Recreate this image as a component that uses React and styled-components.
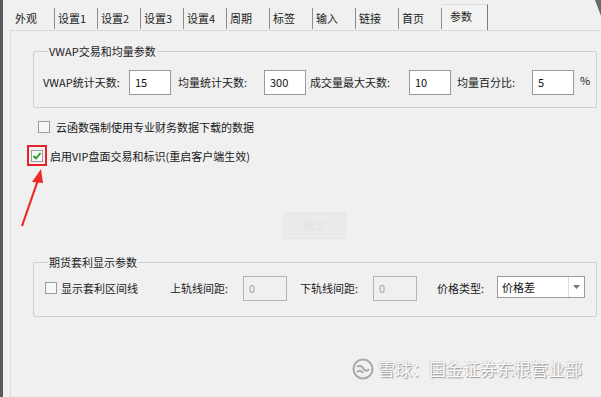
import styled, { createGlobalStyle } from "styled-components"

const Global = createGlobalStyle`
    html, body {
        margin: 0;
        padding: 0;
        background: #f0f0f0;
    }
    * {
        box-sizing: border-box;
    }
`

const Window = styled.div`
    position: relative;
    display: flex;
    width: 601px;
    height: 397px;
    overflow: hidden;
    background: #f0f0f0;
    font-family: "Noto Sans CJK SC", "Microsoft YaHei", sans-serif;
    font-size: 11px;
    color: #1a1a1a;
`

const EdgeStrip = styled.div`
    width: 3px;
    background: #5a5a5a;
    flex-shrink: 0;
`

const Main = styled.div`
    flex: 1;
    display: flex;
    flex-direction: column;
`

const TabBar = styled.div`
    display: flex;
    align-items: flex-end;
    height: 30px;
    padding-left: 9px;
`

const Tab = styled.div`
    width: ${p => p.$w || 43}px;
    height: ${p => (p.$active ? 26 : 21)}px;
    padding-left: ${p => (p.$active ? 8 : 3)}px;
    line-height: ${p => (p.$active ? 22 : 20)}px;
    margin-bottom: ${p => (p.$active ? 0 : 1)}px;
    border-right: 1px solid ${p => (p.$active ? "#7a7a7a" : "#8c8c8c")};
    border-top: ${p => (p.$active ? "1px solid #e0e0e0" : "none")};
    background: ${p => (p.$active ? "#f3f3f3" : "transparent")};
    color: #222;
    white-space: nowrap;
`

const Panel = styled.div`
    position: relative;
    flex: 1;
    margin-left: 7px;
    border-top: 1px solid #dadada;
    border-left: 1px solid #dcdcdc;
    display: flex;
    flex-direction: column;
    padding-left: 22px;
`

const Group = styled.fieldset`
    width: 564px;
    margin: ${p => p.$top}px 0 0 0;
    padding: ${p => p.$pt}px 0 0 9px;
    height: ${p => p.$h}px;
    border: 1px solid #d0d0d0;
    border-radius: 2px;
    display: flex;
    align-items: flex-start;
`

const Legend = styled.legend`
    padding: 0 1px;
    margin-left: 5px;
    font-size: 11px;
    line-height: 14px;
    color: #222;
`

const Label = styled.span`
    width: ${p => p.$w}px;
    flex-shrink: 0;
    white-space: nowrap;
    line-height: ${p => p.$lh || 24}px;
    color: #222;
`

const NumInput = styled.div`
    width: ${p => p.$w || 42}px;
    height: ${p => p.$h || 25}px;
    flex-shrink: 0;
    border: 1px solid ${p => (p.$disabled ? "#b4b4b4" : "#9a9a9a")};
    background: ${p => (p.$disabled ? "#f0f0f0" : "#fff")};
    color: ${p => (p.$disabled ? "#a0a0a0" : "#111")};
    padding: 3px 0 0 5px;
    line-height: 16px;
    margin-right: ${p => p.$mr || 0}px;
`

const CheckRow = styled.div`
    display: flex;
    align-items: center;
    gap: ${p => p.$gap || 6}px;
    margin-top: ${p => p.$top}px;
    margin-left: ${p => p.$left || 0}px;
    height: ${p => p.$h || "auto"};
    white-space: nowrap;
`

const Box = styled.span`
    position: relative;
    display: inline-block;
    width: 12px;
    height: 12px;
    border: 1px solid #9c9c9c;
    background: #f7f7f7;
    flex-shrink: 0;
`

const Highlight = styled.span`
    display: inline-flex;
    align-items: center;
    justify-content: center;
    width: 20px;
    height: 21px;
    border: 2px solid #e4242a;
    margin-left: -5px;
    margin-right: -3px;
`

const FaintButton = styled.div`
    width: 63px;
    height: 27px;
    margin: 46px 0 0 250px;
    background: #ebebeb;
    border: 1px solid #e6e6e6;
    border-radius: 2px;
    color: #e3e3e3;
    text-align: center;
    line-height: 25px;
`

const Combo = styled.div`
    display: flex;
    width: 88px;
    height: 22px;
    border: 1px solid #9a9a9a;
    background: #fff;
`

const ComboText = styled.span`
    flex: 1;
    padding-left: 4px;
    line-height: 20px;
    color: #111;
`

const ComboArrow = styled.span`
    width: 16px;
    border-left: 1px solid #dcdcdc;
    display: flex;
    align-items: center;
    justify-content: center;
`

const Arrow = styled.svg`
    position: absolute;
    left: 12px;
    top: 166px;
`

const Watermark = styled.div`
    position: absolute;
    left: 352px;
    top: 356px;
    display: flex;
    align-items: center;
    gap: 4px;
    font-size: 17px;
    color: #fafafa;
    text-shadow: 1px 1px 1px #9a9a9a, -1px -1px 0 #d8d8d8;
    white-space: nowrap;
`

const Corner = styled.div`
    position: absolute;
    right: 0;
    top: 0;
    width: 0;
    height: 0;
    border-top: 16px solid #6a6a6a;
    border-left: 6px solid transparent;
`

const tabs = ["外观", "设置1", "设置2", "设置3", "设置4", "周期", "标签", "输入", "链接", "首页"]

const Check = () => (
    <svg width="10" height="10" viewBox="0 0 10 10" style={{ position: "absolute", left: 0, top: 0 }}>
        <path d="M1.5 5 L4 7.5 L8.5 2" stroke="#1f9a2a" strokeWidth="1.8" fill="none" />
    </svg>
)

const App = () => (
    <Window>
        <Global />
        <EdgeStrip />
        <Main>
            <TabBar>
                {tabs.map(t => (
                    <Tab key={t}>{t}</Tab>
                ))}
                <Tab $active $w={46}>参数</Tab>
            </TabBar>
            <Panel>
                <Group $top={13} $h={64} $pt={12}>
                    <Legend>VWAP交易和均量参数</Legend>
                    <Label $w={86}>VWAP统计天数:</Label>
                    <NumInput $mr={7}>15</NumInput>
                    <Label $w={86}>均量统计天数:</Label>
                    <NumInput $mr={4}>300</NumInput>
                    <Label $w={99}>成交量最大天数:</Label>
                    <NumInput $mr={6}>10</NumInput>
                    <Label $w={75}>均量百分比:</Label>
                    <NumInput $mr={6}>5</NumInput>
                    <Label $w={10} $lh={20}>%</Label>
                </Group>
                <CheckRow $top={11} $left={5}>
                    <Box />
                    <span>云函数强制使用专业财务数据下载的数据</span>
                </CheckRow>
                <CheckRow $top={10} $left={-1}>
                    <Highlight>
                        <Box>
                            <Check />
                        </Box>
                    </Highlight>
                    <span>启用VIP盘面交易和标识(重启客户端生效)</span>
                </CheckRow>
                <FaintButton>确定</FaintButton>
                <Group $top={16} $h={62} $pt={7}>
                    <Legend>期货套利显示参数</Legend>
                    <CheckRow $top={0} $left={2} $gap={4} $h="24px">
                        <Box />
                        <Label $w={109}>显示套利区间线</Label>
                    </CheckRow>
                    <Label $w={73}>上轨线间距:</Label>
                    <NumInput $disabled $w={44} $h={25} $mr={13}>0</NumInput>
                    <Label $w={73}>下轨线间距:</Label>
                    <NumInput $disabled $w={44} $h={25} $mr={20}>0</NumInput>
                    <Label $w={60}>价格类型:</Label>
                    <Combo>
                        <ComboText>价格差</ComboText>
                        <ComboArrow>
                            <svg width="7" height="4" viewBox="0 0 7 4">
                                <path d="M0 0 L7 0 L3.5 4 Z" fill="#777" />
                            </svg>
                        </ComboArrow>
                    </Combo>
                </Group>
            </Panel>
        </Main>
        <Arrow width="40" height="64" viewBox="0 0 40 64">
            <path d="M10 60 L26 14" stroke="#ee2a24" strokeWidth="2.2" fill="none" />
            <path d="M29 3 L20 16 L31 17 Z" fill="#ee2a24" />
        </Arrow>
        <Watermark>
            <svg width="22" height="22" viewBox="0 0 22 22">
                <circle cx="11" cy="11" r="9.5" fill="none" stroke="#a8a8a8" strokeWidth="2" />
                <path d="M5 9 Q8 6 11 10 Q14 15 17 11 M5 14 Q8 11 11 15" stroke="#a8a8a8" strokeWidth="2" fill="none" />
            </svg>
            <span>雪球：国金证券东根营业部</span>
        </Watermark>
        <Corner />
    </Window>
)

export default App
